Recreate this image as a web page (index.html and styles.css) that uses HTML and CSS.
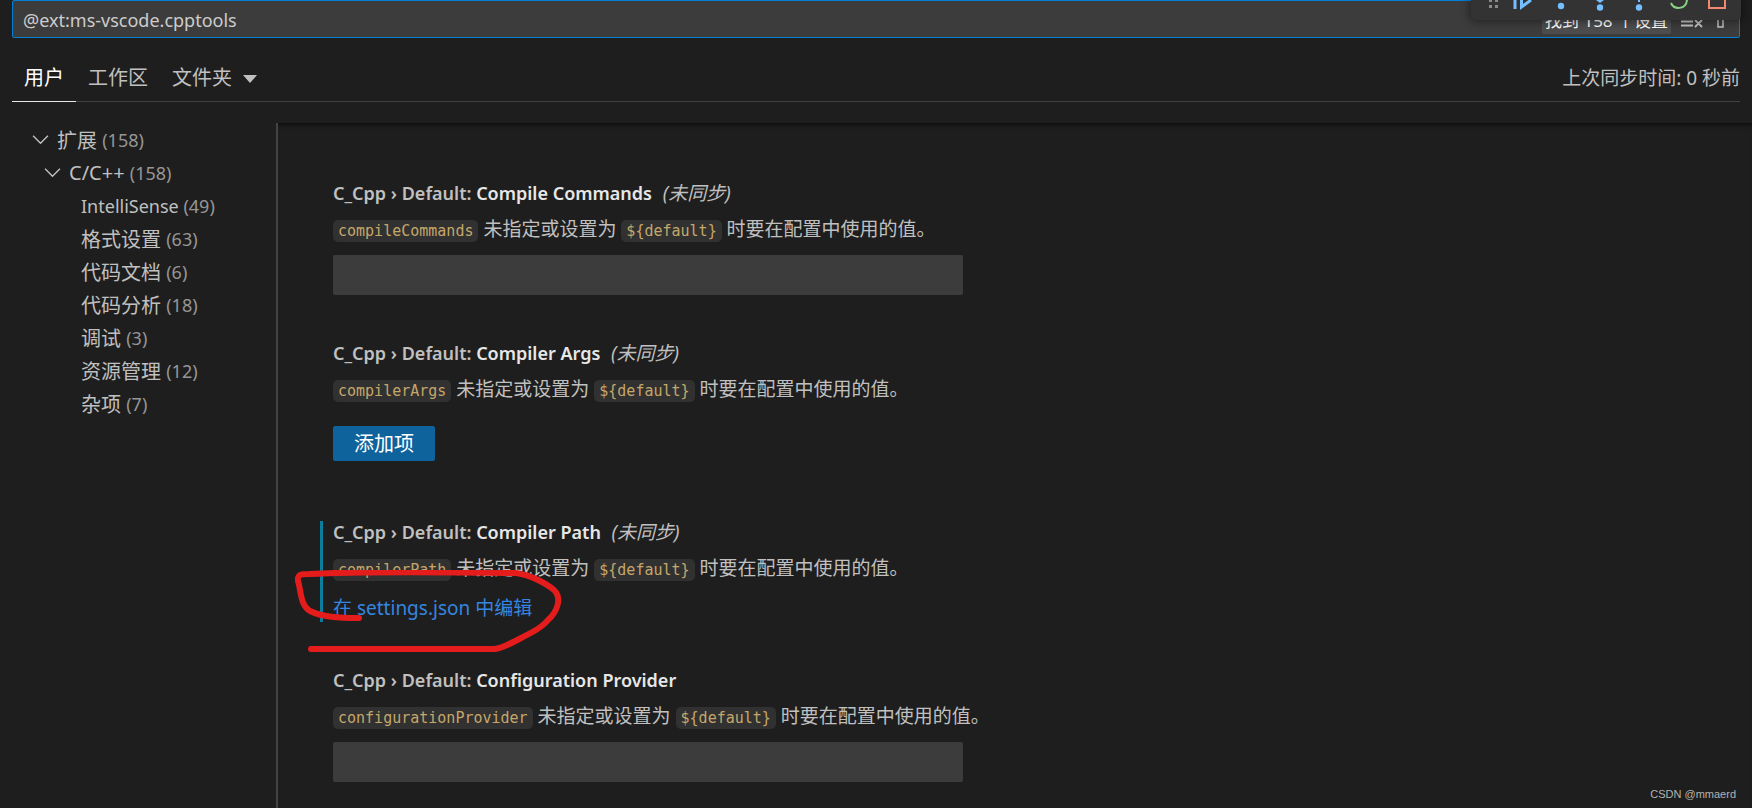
FILE: index.html
```html
<!DOCTYPE html>
<html lang="zh-CN">
<head>
  <meta charset="UTF-8" />
  <meta name="viewport" content="width=device-width, initial-scale=1.0"/>
  <title>设置</title>
  <link rel="stylesheet" href="styles.css">
</head>
<body>
  <!-- Debug toolbar floating over the editor -->
  <div class="debug-toolbar">
    <svg width="270" height="20" viewBox="0 0 270 20" aria-hidden="true">
      <g fill="#8a8a8a">
        <path d="M18 0h3v2h-3zM24 0h3v2h-3zM18 5h3v3h-3zM24 5h3v3h-3z"/>
      </g>
      <g fill="none" stroke="#75beff" stroke-width="3">
        <path d="M44 0V9M50.500 0V7L60 0"/>
        <path d="M168 0V2" stroke-width="2"/>
      </g>
      <g fill="#75beff">
        <circle cx="90" cy="6" r="3.200"/>
        <circle cx="129" cy="7.500" r="3.200"/>
        <circle cx="168" cy="7.500" r="3.200"/>
        <path d="M125 0h8l-4 3z"/>
      </g>
      <path d="M200 3C203 10 215 10 216 0" fill="none" stroke="#89d185" stroke-width="2"/>
      <path d="M238 0V8H254V0" fill="none" stroke="#f48771" stroke-width="2"/>
    </svg>
  </div>

  <header>
    <div class="search">
      <input type="text" value="@ext:ms-vscode.cpptools" aria-label="搜索设置">
      <span class="count">找到 158 个设置</span>
      <button class="icon" aria-label="清除搜索">
        <svg width="24" height="20" viewBox="0 0 24 20"><path d="M1 7H22M1 11.500H13M1 15.500H13M15 10L22 17M22 10L15 17" fill="none" stroke="#c5c5c5" stroke-width="1.800"/></svg>
      </button>
      <button class="icon" aria-label="筛选">
        <svg width="20" height="20" viewBox="0 0 20 20"><path d="M1 2H19V4L12 9V17H7V9L1 4Z" fill="none" stroke="#c5c5c5" stroke-width="1.500"/></svg>
      </button>
    </div>
    <nav class="tabs">
      <a class="active" href="#">用户</a>
      <a href="#">工作区</a>
      <a href="#">文件夹 <i class="caret"></i></a>
      <span class="sync">上次同步时间: 0 秒前</span>
    </nav>
  </header>

  <div class="body">
    <ul class="tree">
      <li class="level1"><svg class="chevron" viewBox="0 0 16 16"><path d="M1 4.500L8 11.500L15 4.500"/></svg>扩展 <span>(158)</span></li>
      <li class="level2"><svg class="chevron" viewBox="0 0 16 16"><path d="M1 4.500L8 11.500L15 4.500"/></svg>C/C++ <span>(158)</span></li>
      <li class="level3 latin">IntelliSense <span>(49)</span></li>
      <li class="level3">格式设置 <span>(63)</span></li>
      <li class="level3">代码文档 <span>(6)</span></li>
      <li class="level3">代码分析 <span>(18)</span></li>
      <li class="level3">调试 <span>(3)</span></li>
      <li class="level3">资源管理 <span>(12)</span></li>
      <li class="level3">杂项 <span>(7)</span></li>
    </ul>

    <main>
      <section class="setting">
        <h2>C_Cpp › Default: <b>Compile Commands</b> <em>(未同步)</em></h2>
        <p><code>compileCommands</code> 未指定或设置为 <code>${default}</code> 时要在配置中使用的值。</p>
        <input type="text" aria-label="Compile Commands">
      </section>

      <section class="setting">
        <h2>C_Cpp › Default: <b>Compiler Args</b> <em>(未同步)</em></h2>
        <p><code>compilerArgs</code> 未指定或设置为 <code>${default}</code> 时要在配置中使用的值。</p>
        <button class="add">添加项</button>
      </section>

      <section class="setting modified">
        <h2>C_Cpp › Default: <b>Compiler Path</b> <em>(未同步)</em></h2>
        <p><code>compilerPath</code> 未指定或设置为 <code>${default}</code> 时要在配置中使用的值。</p>
        <a class="edit" href="#">在 settings.json 中编辑</a>
        <!-- hand-drawn mark around the link -->
        <svg class="mark" width="280" height="90" viewBox="0 0 280 90" aria-hidden="true">
          <path d="M64 48C43 48 27 47 15 41C5 35 6 20 3 11C2 4 6 4 14 4C70 1 150 2 221 3C236 5 252 14 259 20C268 29 261 43 253 50C246 59 237 62 228 67C216 73 207 79 199 79H16"/>
        </svg>
      </section>

      <section class="setting">
        <h2>C_Cpp › Default: <b>Configuration Provider</b></h2>
        <p><code>configurationProvider</code> 未指定或设置为 <code>${default}</code> 时要在配置中使用的值。</p>
        <input type="text" aria-label="Configuration Provider">
      </section>
    </main>
  </div>

  <div class="watermark">CSDN @mmaerd</div>
</body>
</html>
```

FILE: styles.css
```css
* {
  margin: 0;
  padding: 0;
  box-sizing: border-box;
}

body {
  display: flex;
  flex-direction: column;
  height: 100vh;
  overflow: hidden;
  background: #1e1e1e;
  color: #c0c0c0;
  font-family: "Noto Sans", "Noto Sans CJK SC", sans-serif;
  font-size: 19px;
}

button,
input {
  font: inherit;
  border: none;
  outline: none;
}

a {
  color: inherit;
  text-decoration: none;
}

header {
  padding: 0 12px;
}

.search {
  display: flex;
  align-items: center;
  height: 38px;
  padding: 2px 8px 0;
  background: #3c3c3c;
  border: 1px solid #007fd4;
  border-radius: 2px;
}

.search input {
  flex: 1;
  min-width: 0;
  padding-left: 2px;
  background: none;
  color: #cccccc;
  font-size: 18px;
}

.search .count {
  height: 27px;
  margin-right: 2px;
  padding: 0 3px;
  background: #4d4d4d;
  border-radius: 2px;
  color: #ffffff;
  font-size: 17px;
  line-height: 27px;
}

.icon {
  display: flex;
  margin-left: 7px;
  background: none;
  cursor: pointer;
}

.tabs {
  display: flex;
  height: 64px;
  border-bottom: 1px solid #414141;
  line-height: 80px;
}

.tabs a {
  padding: 0 12px;
  font-size: 20px;
}

.tabs .active {
  height: 64px;
  border-bottom: 1px solid #e7e7e7;
  color: #ffffff;
}

.caret {
  display: inline-block;
  margin-left: 6px;
  border: 7px solid transparent;
  border-top: 8px solid #c0c0c0;
  border-bottom: none;
  vertical-align: 2px;
}

.sync {
  margin-left: auto;
}

.body {
  display: flex;
  flex: 1;
  min-height: 0;
  padding-top: 21px;
}

.tree {
  width: 276px;
  list-style: none;
}

.tree li {
  display: flex;
  align-items: center;
  height: 33px;
  font-size: 20px;
  white-space: pre;
}

.tree span {
  color: #969696;
  font-size: 18px;
}

.tree .latin {
  font-size: 18px;
}

.level1 {
  padding-left: 32px;
}

.level2 {
  padding-left: 44px;
}

.level3 {
  padding-left: 81px;
}

.chevron {
  width: 17px;
  height: 17px;
  margin-right: 8px;
  fill: none;
  stroke: #c0c0c0;
  stroke-width: 1.3;
}

main {
  flex: 1;
  padding: 59px 0 0 55px;
  border-left: 2px solid #444444;
  box-shadow: inset 0 6px 6px -6px #000000;
}

.setting {
  position: relative;
  margin-bottom: 47px;
}

.setting h2 {
  font-size: 18px;
  font-weight: 600;
  line-height: 22px;
}

.setting b {
  color: #e7e7e7;
  font-weight: 600;
}

.setting em {
  margin-left: 6px;
  font-size: 19px;
  font-weight: 400;
  line-height: 20px;
}

.setting p {
  margin: 11px 0 12px;
  line-height: 28px;
}

code {
  padding: 2px 5px;
  background: #313131;
  border-radius: 5px;
  color: #c5a76a;
  font-family: "DejaVu Sans Mono", monospace;
  font-size: 15px;
  line-height: 20px;
}

.setting input {
  display: block;
  width: 630px;
  max-width: 100%;
  height: 40px;
  padding: 0 8px;
  background: #3c3c3c;
  border-radius: 2px;
  color: #cccccc;
}

.add {
  display: block;
  height: 35px;
  margin: 23px 0 60px;
  padding: 0 21px;
  background: #0e639c;
  border-radius: 2px;
  color: #ffffff;
  font-size: 20px;
  line-height: 35px;
  cursor: pointer;
}

.modified::before {
  content: "";
  position: absolute;
  top: 0;
  bottom: 0;
  left: -13px;
  width: 3px;
  background: #0c7d9d;
}

.edit {
  display: block;
  width: max-content;
  color: #3586e0;
  line-height: 28px;
}

.mark {
  position: absolute;
  top: 49px;
  left: -38px;
  fill: none;
  stroke: #e51c1c;
  stroke-width: 6px;
  stroke-linecap: round;
  stroke-linejoin: round;
  pointer-events: none;
}

.debug-toolbar {
  position: absolute;
  top: 0;
  right: 11px;
  z-index: 1;
  height: 20px;
  background: #333333;
  border-radius: 0 0 5px 5px;
  box-shadow: 0 0 8px 2px rgba(0, 0, 0, 0.4);
}

.debug-toolbar svg {
  display: block;
}

.watermark {
  position: absolute;
  right: 16px;
  bottom: 8px;
  color: #b4b4b4;
  font-family: "Liberation Sans", sans-serif;
  font-size: 11px;
}
```
